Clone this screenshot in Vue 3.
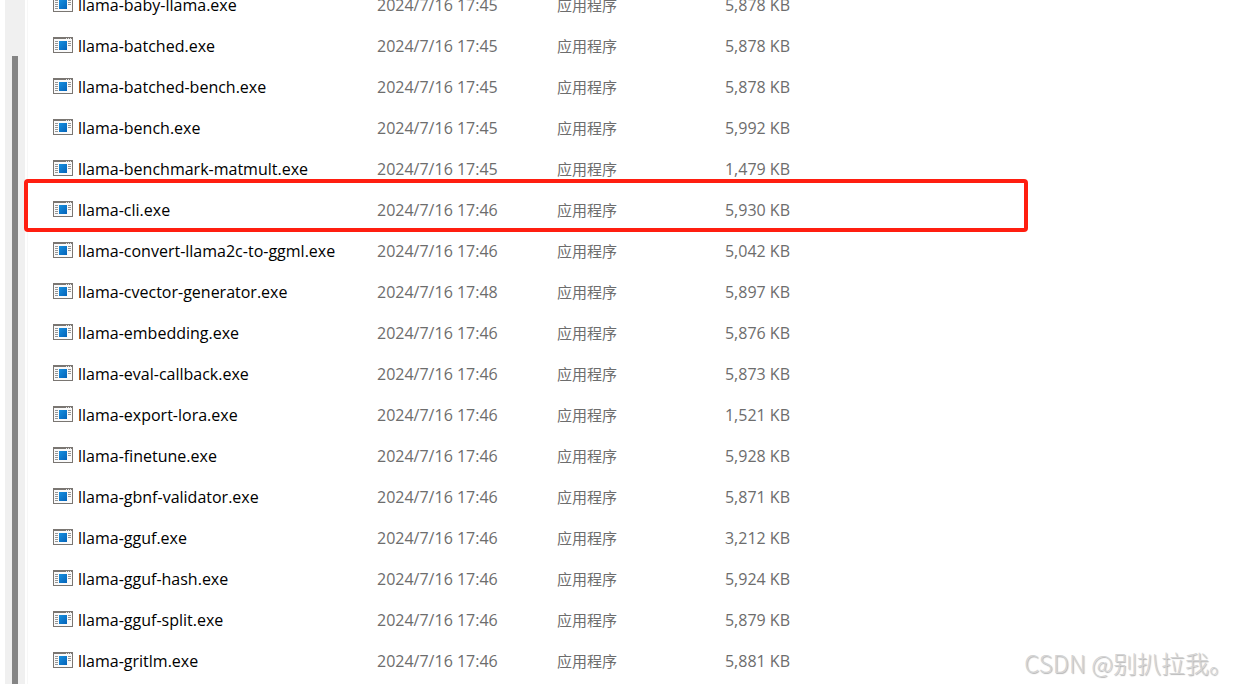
<script setup>
const rows = [
  ['llama-baby-llama.exe', '17:45', '5,878'],
  ['llama-batched.exe', '17:45', '5,878'],
  ['llama-batched-bench.exe', '17:45', '5,878'],
  ['llama-bench.exe', '17:45', '5,992'],
  ['llama-benchmark-matmult.exe', '17:45', '1,479'],
  ['llama-cli.exe', '17:46', '5,930'],
  ['llama-convert-llama2c-to-ggml.exe', '17:46', '5,042'],
  ['llama-cvector-generator.exe', '17:48', '5,897'],
  ['llama-embedding.exe', '17:46', '5,876'],
  ['llama-eval-callback.exe', '17:46', '5,873'],
  ['llama-export-lora.exe', '17:46', '1,521'],
  ['llama-finetune.exe', '17:46', '5,928'],
  ['llama-gbnf-validator.exe', '17:46', '5,871'],
  ['llama-gguf.exe', '17:46', '3,212'],
  ['llama-gguf-hash.exe', '17:46', '5,924'],
  ['llama-gguf-split.exe', '17:46', '5,879'],
  ['llama-gritlm.exe', '17:46', '5,881'],
]
</script>

<template>
  <div class="explorer">
    <div class="rail"><div class="thumb"></div></div>
    <main class="pane">
      <table class="files">
        <colgroup><col class="c-name" /><col class="c-date" /><col class="c-type" /><col class="c-size" /></colgroup>
        <tbody>
          <tr v-for="r in rows" :key="r[0]">
            <td class="name">
              <div class="file">
                <svg class="icon" width="20" height="16" viewBox="0 0 20 16" shape-rendering="crispEdges" aria-hidden="true">
                  <defs>
                    <linearGradient id="app-blue" x1="0" y1="0" x2="1" y2="1">
                      <stop offset="0" stop-color="#1690e0" />
                      <stop offset="1" stop-color="#0563b8" />
                    </linearGradient>
                  </defs>
                  <rect width="20" height="16" fill="#7a7672" />
                  <rect x="1" y="2" width="18" height="13" fill="#fafafa" />
                  <path d="M13 1h1v1h-1zM15 1h1v1h-1zM17 1h1v1h-1z" fill="#e4e4e4" />
                  <path d="M2 4h3v1H2zM2 6h3v1H2zM2 8h3v1H2zM2 10h3v1H2zM2 12h3v1H2zM15 4h3v1h-3zM15 6h3v1h-3zM15 8h3v1h-3z" fill="#969696" />
                  <rect x="6" y="4" width="8" height="9" fill="url(#app-blue)" />
                </svg>
                <span>{{ r[0] }}</span>
              </div>
            </td>
            <td>2024/7/16 {{ r[1] }}</td>
            <td class="type">应用程序</td>
            <td class="size">{{ r[2] }} KB</td>
          </tr>
        </tbody>
      </table>
      <div class="highlight"></div>
    </main>
    <div class="watermark">CSDN @别扒拉我。</div>
  </div>
</template>

<style>
body { margin: 0; background: #fff; }
</style>

<style scoped>
.explorer { position: relative; display: flex; height: 100vh; overflow: hidden; font: 16px/20px "Open Sans", "Noto Sans CJK SC", sans-serif; color: #6d6d6d; }
.rail { box-sizing: border-box; width: 20px; margin-left: 5px; padding: 56px 7px 0; background: #f0f0f0; display: flex; }
.thumb { flex: 1; background: #858585; }
.pane { position: relative; flex: 1; min-width: 0; border-left: 2px solid #fff; box-shadow: inset 1px 0 #f7f7f7; }
.files { width: 737px; margin: -16px 0 0 26px; border-collapse: collapse; table-layout: fixed; }
.c-name { width: 324px; }
.c-date { width: 180px; }
.c-type { width: 110px; }
td { height: 41px; padding: 0; white-space: nowrap; }
.name { color: #000; }
.file { display: flex; align-items: center; gap: 5px; }
.icon { margin-bottom: 2px; }
.type { font-size: 15px; }
.size { text-align: right; }
.highlight { position: absolute; left: -3px; top: 179px; box-sizing: border-box; width: 1004px; height: 53px; border: 4px solid #ff1e10; border-radius: 4px; }
.watermark { position: absolute; right: 3px; bottom: 5px; font: 300 24px/32px "Noto Sans CJK SC", sans-serif; color: #d4d4d4; text-shadow: 1px 1px 1px #b4b4b4; }
</style>
